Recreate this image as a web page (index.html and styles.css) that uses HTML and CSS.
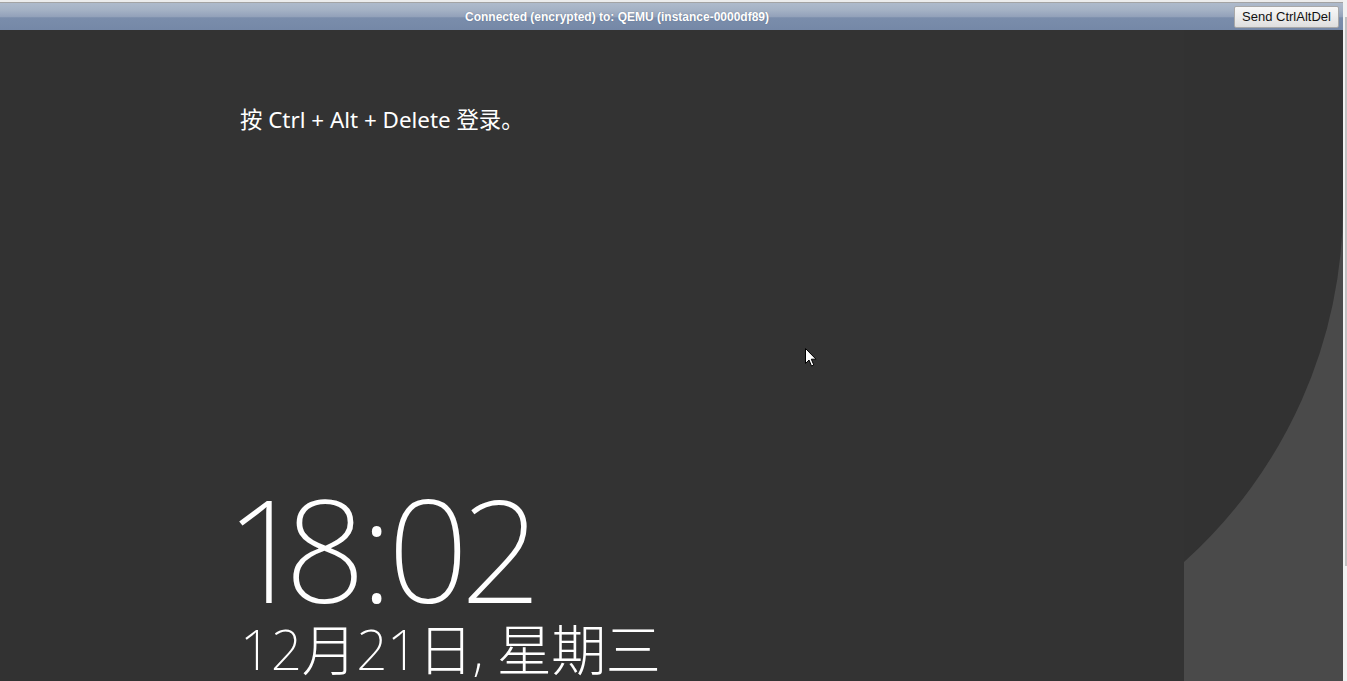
FILE: index.html
```html
<!DOCTYPE html>
<html lang="zh-CN">
<head>
<meta charset="utf-8">
<title>noVNC</title>
<link rel="stylesheet" href="styles.css">
</head>
<body>
<div class="page">
  <div class="screen">
    <div class="top-gap"></div>
    <div class="status-bar">
      <div class="status-text">Connected (encrypted) to: QEMU (instance-0000df89)</div>
      <button class="cad-button" type="button">Send CtrlAltDel</button>
    </div>
    <div class="desktop">
      <div class="side side-left"></div>
      <div class="center">
        <div class="hint">按 Ctrl + Alt + Delete 登录。</div>
        <div class="clock">
          <div class="time">18:02</div>
          <div class="date">12月21日, 星期三</div>
        </div>
      </div>
      <div class="side side-right">
        <svg class="deco" width="159" height="651" viewBox="0 0 159 651" aria-hidden="true">
          <path d="M159,174 A479,479 0 0 1 0,532 L0,651 L159,651 Z" fill="#4a4a4a"/>
        </svg>
      </div>
      <svg class="cursor" width="13" height="20" viewBox="0 0 13 20" aria-hidden="true">
        <path d="M0.5,0.5 L0.5,15.5 L4,12 L6.5,18 L8.8,17 L6.3,11.2 L11,11.2 Z" fill="#ffffff" stroke="#000000" stroke-width="1" stroke-linejoin="miter"/>
      </svg>
    </div>
  </div>
  <div class="scrollbar">
    <div class="scroll-thumb"></div>
  </div>
</div>
</body>
</html>
```
FILE: styles.css
```css
html, body {
  margin: 0;
  padding: 0;
  background: #ffffff;
  overflow: hidden;
}

.page {
  display: flex;
  width: 1347px;
  height: 681px;
}

.screen {
  width: 1343px;
  display: flex;
  flex-direction: column;
}

.top-gap {
  height: 2px;
  background: #ececec;
  border-bottom: 1px solid #a3a3a3;
}

.status-bar {
  height: 27px;
  display: flex;
  align-items: center;
  background: linear-gradient(to bottom, #aebacb 0%, #a5b2c5 25%, #93a2ba 50%, #7a8dab 55%, #7588a7 100%);
}

.status-text {
  flex: 1;
  text-align: center;
  font-family: "Liberation Sans", Arial, sans-serif;
  font-weight: bold;
  font-size: 12px;
  color: #ffffff;
  text-shadow: 0 0 1px rgba(60, 70, 90, 0.5);
  padding-top: 1px;
}

.cad-button {
  width: 105px;
  height: 22px;
  margin-right: 4px;
  padding: 0;
  border: 1px solid #a8a8a8;
  border-radius: 2px;
  background: linear-gradient(to bottom, #f8f8f8 0%, #ececec 50%, #dedede 100%);
  font-family: "Liberation Sans", Arial, sans-serif;
  font-size: 13px;
  color: #111111;
  box-sizing: border-box;
}

.desktop {
  flex: 1;
  display: flex;
  position: relative;
  background: #323232;
  overflow: hidden;
}

.side-left {
  width: 160px;
}

.center {
  width: 1024px;
  background: #333333;
  display: flex;
  flex-direction: column;
  padding-left: 80px;
  box-sizing: border-box;
}

.side-right {
  width: 159px;
  background: #323232;
}

.deco {
  display: block;
}

.hint {
  margin-top: 75px;
  font-family: "Noto Sans", "Noto Sans CJK SC", sans-serif;
  font-size: 22.4px;
  line-height: 30px;
  color: #ffffff;
}

.clock {
  margin-top: 345px;
  color: #ffffff;
  font-family: "Noto Sans", "Noto Sans CJK SC", sans-serif;
  font-weight: 200;
}

.time {
  font-size: 142px;
  line-height: 136px;
  margin-left: -4px;
  letter-spacing: -6px;
  font-variant-numeric: proportional-nums;
  white-space: nowrap;
}

.date {
  margin-top: 5px;
  font-size: 55px;
  line-height: 55px;
  letter-spacing: -0.5px;
  font-family: "Noto Sans", "Noto Sans CJK SC", sans-serif;
  font-weight: 200;
}

.cursor {
  position: absolute;
  left: 805px;
  top: 318px;
}

.scrollbar {
  width: 4px;
  background: #f1f1f1;
  padding-top: 17px;
  box-sizing: border-box;
}

.scroll-thumb {
  margin-left: 2px;
  width: 2px;
  height: 549px;
  background: #c1c1c1;
}
```
